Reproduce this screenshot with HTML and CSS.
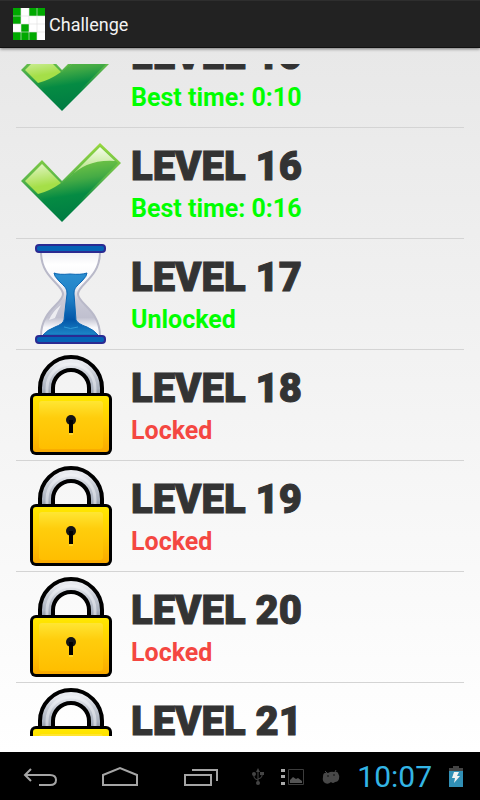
FILE: index.html
```html
<!DOCTYPE html>
<html lang="en">
<head>
    <meta charset="UTF-8">
    <meta name="viewport" content="width=device-width, initial-scale=1.0">
    <title>Challenge</title>
    <link rel="stylesheet" href="styles.css">
</head>
<body>

    <!-- shared icons -->
    <svg class="sprite" aria-hidden="true">
        <defs>
            <linearGradient id="check-fill" x1="0.35" y1="0" x2="0.55" y2="1">
                <stop offset="0.2" stop-color="#7cca45"/>
                <stop offset="0.48" stop-color="#45ab45"/>
                <stop offset="0.68" stop-color="#058b43"/>
                <stop offset="1" stop-color="#007b43"/>
            </linearGradient>
            <linearGradient id="check-edge" x1="0" y1="0" x2="0" y2="1">
                <stop offset="0" stop-color="#98d83c"/>
                <stop offset="0.45" stop-color="#5db84b"/>
                <stop offset="0.75" stop-color="#058843"/>
                <stop offset="1" stop-color="#007b43"/>
            </linearGradient>
            <linearGradient id="check-left" x1="0" y1="0" x2="0.2" y2="1">
                <stop offset="0" stop-color="#e6f6cd"/>
                <stop offset="0.8" stop-color="#a5df48"/>
            </linearGradient>
            <linearGradient id="check-right" x1="0" y1="0" x2="0" y2="1">
                <stop offset="0" stop-color="#f6fceb"/>
                <stop offset="1" stop-color="#a6dd69"/>
            </linearGradient>
            <linearGradient id="glass" x1="0" y1="0" x2="0" y2="1">
                <stop offset="0" stop-color="#eeeef3"/>
                <stop offset="0.15" stop-color="#ffffff"/>
                <stop offset="0.4" stop-color="#f4f4f8"/>
                <stop offset="0.58" stop-color="#c9c9d6"/>
                <stop offset="0.78" stop-color="#c0c0cf"/>
                <stop offset="0.9" stop-color="#f8f8fb"/>
            </linearGradient>
            <linearGradient id="sand" x1="0" y1="0" x2="0" y2="1">
                <stop offset="0" stop-color="#2c8fd0"/>
                <stop offset="0.4" stop-color="#2080c6"/>
                <stop offset="0.75" stop-color="#0256a8"/>
                <stop offset="1" stop-color="#1d86c8"/>
            </linearGradient>
            <linearGradient id="metal" x1="0" y1="0" x2="0" y2="1">
                <stop offset="0" stop-color="#e9ebf0"/>
                <stop offset="0.35" stop-color="#c5cad3"/>
                <stop offset="0.75" stop-color="#aab2bf"/>
                <stop offset="1" stop-color="#858e9b"/>
            </linearGradient>
            <linearGradient id="gold" x1="0" y1="0" x2="0" y2="1">
                <stop offset="0" stop-color="#ffe800"/>
                <stop offset="0.5" stop-color="#ffcc00"/>
                <stop offset="1" stop-color="#f9a900"/>
            </linearGradient>
            <linearGradient id="gold-face" x1="0" y1="0" x2="0" y2="1">
                <stop offset="0" stop-color="#ffe633"/>
                <stop offset="0.35" stop-color="#ffcd0c"/>
                <stop offset="1" stop-color="#ffbe00"/>
            </linearGradient>
        </defs>

        <symbol id="icon-done" viewBox="0 0 100 100">
            <path fill="url(#check-edge)" d="M0 48L21 27L41 48L79 10L100 30L41 89Z"/>
            <path fill="url(#check-fill)" d="M3 48L21 30L41 50L79 13L97 30L41 86Z"/>
            <path fill="url(#check-left)" d="M4 48L21 31L40 50Q29 58 17 61Z"/>
            <path fill="url(#check-right)" d="M48 45L79 14L94 28Q65 26 48 45Z"/>
        </symbol>

        <symbol id="icon-open" viewBox="0 0 100 100">
            <path fill="url(#glass)" stroke="#b9b9c9" stroke-width="2" d="M20 8C20 34 42 40 42 50C42 60 20 66 20 92H79C79 66 57 60 57 50C57 40 79 34 79 8Z"/>
            <path fill="#fff" opacity=".7" d="M40 61Q31 68 28 76L34 74Q37 66 40 61Z"/>
            <path fill="url(#sand)" stroke="#0b66b3" stroke-width="1" stroke-linejoin="round" d="M33 29Q38 31 49 30Q60 31 66 29Q66 32 61 37C55 43 53 44 53 50L55 76Q57 80 66 83Q73 86 77 91H22Q26 86 34 83Q42 80 43 76L46 50C46 44 44 43 38 37Q33 32 33 29Z"/>
            <path fill="none" stroke="#2e9bd8" stroke-width="1" d="M43 83Q49 86 57 83"/>
            <rect x="15" y="1" width="69" height="7" rx="3" fill="#0563b5" stroke="#2b2a92" stroke-width="2"/>
            <rect x="15" y="92" width="69" height="7" rx="3" fill="#0563b5" stroke="#2b2a92" stroke-width="2"/>
        </symbol>

        <symbol id="icon-locked" viewBox="0 0 100 100">
            <path fill="none" stroke="#000" stroke-width="17" d="M25.500 42V33A24.500 24.500 0 0 1 74.500 33V42"/>
            <path fill="none" stroke="url(#metal)" stroke-width="9" d="M25.500 42V33A24.500 24.500 0 0 1 74.500 33V42"/>
            <path fill="none" stroke="#f4f6f9" stroke-width="3" opacity=".5" d="M26 39V33A24 24 0 0 1 74 33V39"/>
            <rect x="9" y="38" width="82" height="62" rx="6" fill="#000"/>
            <rect x="12" y="41" width="76" height="56" rx="3" fill="url(#gold)"/>
            <rect x="18" y="46" width="64" height="48" rx="3" fill="url(#gold-face)"/>
            <circle cx="50" cy="65" r="5" fill="#141414"/>
            <path stroke="#000" stroke-width="4" d="M50 65V78"/>
            <path stroke="#ffe95a" stroke-width="1" d="M48 79H52"/>
        </symbol>
    </svg>

    <header class="action-bar">
        <svg class="app-icon" viewBox="0 0 32 32" aria-hidden="true">
            <path fill="#fff" d="M0 0H32V32H0Z"/>
            <path fill="#00a900" d="M0 0H8V16H0ZM16 0H32V8H16ZM8 16H16V32H8ZM0 24H24V32H0Z"/>
            <path fill="none" stroke="#ddd" stroke-opacity=".6" d="M8 0V32M16 0V32M24 0V32M0 8H32M0 16H32M0 24H32"/>
        </svg>
        <h1 class="title">Challenge</h1>
    </header>

    <main class="screen">
        <ul class="levels" id="levels">
            <li><button class="level" type="button">
                <svg class="level-icon"><use href="#icon-done"/></svg>
                <span class="level-text"><span class="level-name">LEVEL 15</span><span class="status open">Best time: 0:10</span></span>
            </button></li>
            <li><button class="level" type="button">
                <svg class="level-icon"><use href="#icon-done"/></svg>
                <span class="level-text"><span class="level-name">LEVEL 16</span><span class="status open">Best time: 0:16</span></span>
            </button></li>
            <li><button class="level" type="button">
                <svg class="level-icon"><use href="#icon-open"/></svg>
                <span class="level-text"><span class="level-name">LEVEL 17</span><span class="status open">Unlocked</span></span>
            </button></li>
            <li><button class="level" type="button">
                <svg class="level-icon"><use href="#icon-locked"/></svg>
                <span class="level-text"><span class="level-name">LEVEL 18</span><span class="status locked">Locked</span></span>
            </button></li>
            <li><button class="level" type="button">
                <svg class="level-icon"><use href="#icon-locked"/></svg>
                <span class="level-text"><span class="level-name">LEVEL 19</span><span class="status locked">Locked</span></span>
            </button></li>
            <li><button class="level" type="button">
                <svg class="level-icon"><use href="#icon-locked"/></svg>
                <span class="level-text"><span class="level-name">LEVEL 20</span><span class="status locked">Locked</span></span>
            </button></li>
            <li><button class="level" type="button">
                <svg class="level-icon"><use href="#icon-locked"/></svg>
                <span class="level-text"><span class="level-name">LEVEL 21</span><span class="status locked">Locked</span></span>
            </button></li>
        </ul>
    </main>

    <footer class="system-bar">
        <nav class="keys">
            <button type="button" aria-label="Back">
                <svg width="36" height="24" viewBox="0 0 36 24"><path d="M9 4L3 10L9 16M3 10H28Q34 10 34 15Q34 20 28 20H17"/></svg>
            </button>
            <button type="button" aria-label="Home">
                <svg width="36" height="24" viewBox="0 0 36 24"><path d="M1 20V10L18 3L35 10V20Z"/></svg>
            </button>
            <button type="button" aria-label="Recent apps">
                <svg width="36" height="24" viewBox="0 0 36 24"><path d="M3 10H29V20H3ZM10 5H35V16"/></svg>
            </button>
        </nav>
        <div class="tray">
            <svg width="12" height="18" viewBox="0 0 12 18" aria-hidden="true">
                <path fill="none" stroke="#444" d="M6 2V15M2 7V9Q2 11 6 12M10 6V8Q10 10 6 11"/>
                <path fill="#444" d="M6 0L8 4H4ZM8 4H12V7H8Z"/>
                <circle cx="2" cy="6" r="2" fill="#444"/>
                <circle cx="6" cy="15" r="2" fill="#444"/>
            </svg>
            <svg width="24" height="18" viewBox="0 0 24 18" aria-hidden="true">
                <path fill="#aaa" d="M0 1H4V4H0ZM0 7H4V10H0ZM0 14H4V17H0Z"/>
                <path fill="none" stroke="#3c3c3c" d="M7.500 1.500H22.500V16.500H7.500Z"/>
                <path fill="#555" d="M9 15V12L12 9L15 11L17 10L21 13V15Z"/>
            </svg>
            <svg width="18" height="18" viewBox="0 0 18 18" aria-hidden="true">
                <path fill="#484848" d="M3 5Q4 4 6 5Q9 3 12 4Q15 3 16 5Q18 8 17 11Q16 14 13 14Q11 16 9 14Q6 17 3 15Q0 13 1 9Q1 5 3 5Z"/>
                <path stroke="#484848" d="M3 3L6 6M14 2L12 6"/>
                <circle cx="6" cy="8" r="1" fill="#222"/>
                <circle cx="12" cy="7" r="1" fill="#222"/>
            </svg>
            <time class="clock">10:07</time>
            <svg width="14" height="22" viewBox="0 0 14 22" aria-hidden="true">
                <path fill="#444" d="M4 0H10V2H14V5H0V2H4Z"/>
                <path fill="#318fb5" d="M0 5H14V21H0Z"/>
                <path fill="#f2f2f2" d="M5 6H10L8 10H11L5 17L6 12H3Z"/>
            </svg>
        </div>
    </footer>

    <script>
        document.getElementById("levels").scrollTop = 47;
    </script>
</body>
</html>
```

FILE: styles.css
```css
* {
    margin: 0;
    padding: 0;
    box-sizing: border-box;
}
html, body {
    height: 100%;
}
body {
    display: flex;
    flex-direction: column;
    overflow: hidden;
    background: #000;
    font-family: Roboto, "Liberation Sans", sans-serif;
}
button {
    border: 0;
    background: none;
    font: inherit;
    color: inherit;
    cursor: pointer;
}
.sprite {
    position: absolute;
    width: 0;
    height: 0;
}

/* top bar */
.action-bar {
    flex: none;
    display: flex;
    align-items: center;
    gap: 4px;
    height: 48px;
    padding: 0 13px;
    background: #222;
    border-top: 1px solid #2e2e2e;
    border-bottom: 1px solid #111;
    box-shadow: 0 1px 3px rgba(0, 0, 0, 0.5);
    z-index: 1;
}
.app-icon {
    width: 32px;
    height: 32px;
}
.title {
    padding-top: 2px;
    font-size: 18px;
    font-weight: 400;
    line-height: 24px;
    color: #f3f3f3;
}

/* level list */
.screen {
    flex: 1;
    min-height: 0;
    padding: 16px;
    background: linear-gradient(#e8e8e8, #fff);
}
.levels {
    height: 100%;
    overflow-y: scroll;
    scrollbar-width: none;
    list-style: none;
}
.levels li {
    border-bottom: 1px solid #d4d4d4;
}
.level {
    display: flex;
    align-items: center;
    gap: 10px;
    width: 100%;
    padding: 5px;
    text-align: left;
}
.level-icon {
    flex: none;
    width: 100px;
    height: 100px;
}
.level-text {
    display: flex;
    flex-direction: column;
    gap: 4px;
    padding-top: 2px;
}
.level-name {
    font-size: 40px;
    font-weight: 900;
    line-height: 46px;
    color: #333;
    -webkit-text-stroke: 1px #333;
}
.status {
    font-size: 25px;
    font-weight: 700;
    line-height: 30px;
}
.open {
    color: #0f0;
}
.locked {
    color: #f44741;
}

/* system bar */
.system-bar {
    flex: none;
    display: flex;
    justify-content: space-between;
    height: 48px;
    padding-top: 2px;
    background: #000;
}
.keys {
    display: flex;
}
.keys button {
    display: flex;
    align-items: center;
    justify-content: center;
    width: 80px;
}
.keys path {
    fill: none;
    stroke: #a5a5a5;
    stroke-width: 2;
}
.tray {
    display: flex;
    align-items: center;
    gap: 17px;
    padding-right: 17px;
}
.clock {
    font-size: 30px;
    font-weight: 400;
    line-height: 46px;
    color: #33b5e5;
}
```
